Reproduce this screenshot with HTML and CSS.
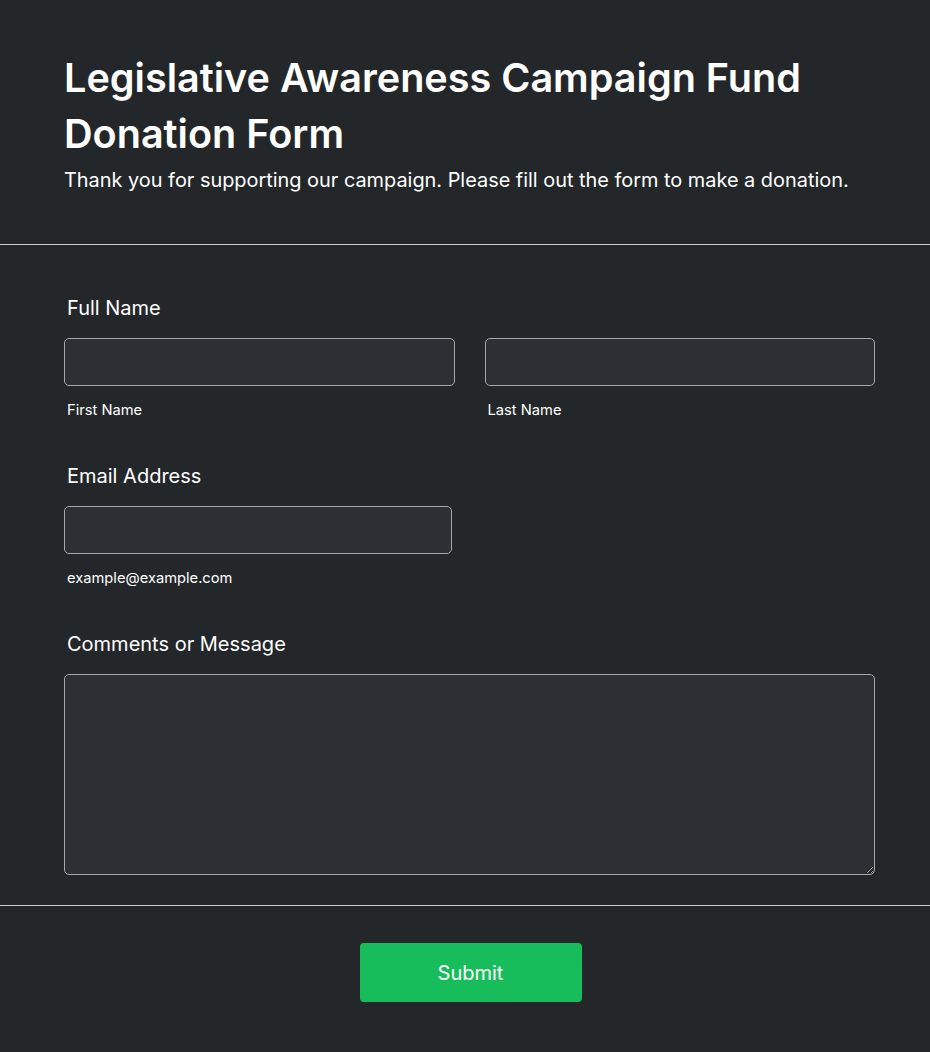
FILE: index.html
```html
<!DOCTYPE html>
<html lang="en">
<head>
<meta charset="utf-8">
<title>Donation Form</title>
<link rel="stylesheet" href="styles.css">
</head>
<body>
<form class="form">
  <header class="header">
    <h1 class="title">Legislative Awareness Campaign Fund Donation Form</h1>
    <p class="subtitle">Thank you for supporting our campaign. Please fill out the form to make a donation.</p>
  </header>
  <section class="fields">
    <div class="field">
      <label class="label">Full Name</label>
      <div class="row">
        <div class="col">
          <input class="input" type="text">
          <span class="sublabel">First Name</span>
        </div>
        <div class="col">
          <input class="input" type="text">
          <span class="sublabel">Last Name</span>
        </div>
      </div>
    </div>
    <div class="field">
      <label class="label">Email Address</label>
      <div class="col email">
        <input class="input" type="email">
        <span class="sublabel">example@example.com</span>
      </div>
    </div>
    <div class="field last">
      <label class="label">Comments or Message</label>
      <textarea class="textarea"></textarea>
    </div>
  </section>
  <footer class="footer">
    <button class="submit" type="button">Submit</button>
  </footer>
</form>
</body>
</html>
```

FILE: styles.css
```css
* { box-sizing: border-box; }
html, body {
  margin: 0;
  padding: 0;
  background: #24272a;
}
body {
  font-family: Inter, "Noto Sans", sans-serif;
  color: #ffffff;
  width: 930px;
  height: 1052px;
}
.form { display: flex; flex-direction: column; }
.header {
  padding: 50px 64px 0 64px;
  height: 245px;
  border-bottom: 1px solid #c9cbcd;
}
.title {
  margin: 0;
  font-size: 39.6px;
  line-height: 56px;
  font-weight: 600;
  letter-spacing: 0;
}
.subtitle {
  margin: 3px 0 0 0;
  font-size: 19.9px;
  line-height: 30px;
  font-weight: 400;
}
.fields {
  padding: 51px 55px 0 64px;
  height: 661px;
  border-bottom: 1px solid #c9cbcd;
}
.field { display: flex; flex-direction: column; margin-bottom: 44px; }
.field.last { margin-bottom: 0; }
.label {
  font-size: 20px;
  line-height: 24px;
  font-weight: 400;
  margin: 0 0 18px 3px;
}
.row { display: flex; gap: 30px; }
.col { display: flex; flex-direction: column; flex: 1; }
.col.email { width: 388px; flex: none; }
.input {
  height: 48px;
  width: 100%;
  background: #2c2f34;
  border: 1px solid #a4a8ae;
  border-radius: 5px;
  color: #fff;
  font: inherit;
}
.sublabel {
  font-size: 14.7px;
  line-height: 20px;
  margin: 14px 0 0 3px;
}
.textarea {
  display: block;
  width: 100%;
  height: 201px;
  background: #2c2f34;
  border: 1px solid #a4a8ae;
  border-radius: 5px;
  color: #fff;
  font: inherit;
  resize: vertical;
}
.footer {
  display: flex;
  justify-content: center;
  padding: 37px 55px 0 64px;
}
.submit {
  width: 222px;
  height: 59px;
  background: #18bd5b;
  border: none;
  border-radius: 4px;
  color: #fff;
  font-family: Inter, "Noto Sans", sans-serif;
  font-size: 20px;
  font-weight: 400;
  margin-left: 2px;
}
```
